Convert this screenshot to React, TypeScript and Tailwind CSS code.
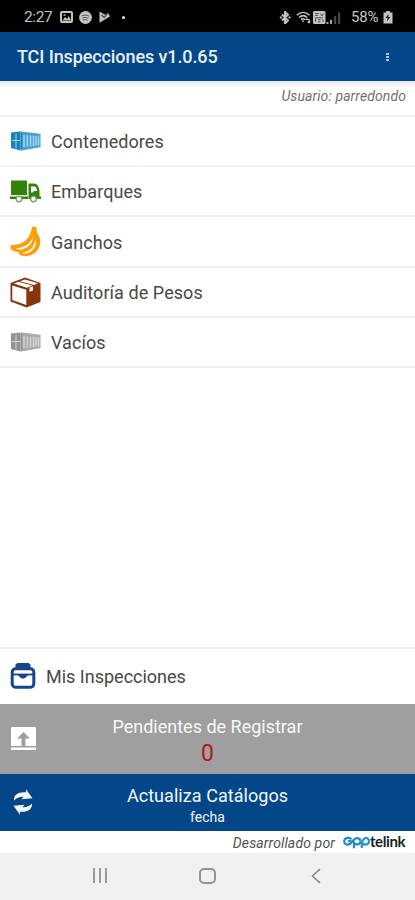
import React from "react";

function StatusBar() {
  return (
    <div className="flex h-8 shrink-0 items-center bg-black pl-6 pr-[22px] pt-[2px] text-[#c4c4c4]">
      <span className="w-[29px] pt-px text-[15.5px] leading-none tracking-[-0.4px]">2:27</span>
      <svg className="ml-[7px]" width="13" height="12" viewBox="0 0 13 12">
        <rect x="1" y="1" width="11" height="10" rx="1" fill="none" stroke="currentColor" strokeWidth="2" />
        <path d="M2.5 9.5 5 6l2 2 1.800-3 2.200 4.500zM3.500 3.200h2v1.600h-2z" fill="currentColor" />
      </svg>
      <svg className="ml-[6px]" width="13" height="13" viewBox="0 0 13 13">
        <circle cx="6.5" cy="6.5" r="6.4" fill="currentColor" />
        <path d="M3 4.600c2.500-.8 5-.6 7.200.6M3.400 6.800c2.200-.6 4.200-.4 6 .6M3.800 8.800c1.800-.4 3.400-.2 4.800.6" fill="none" stroke="#555" strokeWidth="1" />
      </svg>
      <svg className="ml-[7px]" width="12" height="12" viewBox="0 0 12 12">
        <path d="M.5.5 6 3.700 9 2l2 3.500L.5 11.700z" fill="currentColor" />
        <path d="m2.500 4 2.700 2.500L8.500 2.500" fill="none" stroke="#333" strokeWidth="1.100" />
      </svg>
      <span className="ml-[11px] h-[3px] w-[3px] rounded-full bg-[#e4e4e4]" />
      <svg className="ml-auto" width="12" height="13" viewBox="0 0 12 13">
        <path d="m3 3.500 6 6-3 3V.8l3 3-6 5.700M.8 6.500h2M9.500 6.500h2" fill="none" stroke="currentColor" strokeWidth="1.900" />
      </svg>
      <svg className="ml-[5px]" width="16" height="13" viewBox="0 0 16 13">
        <path d="M.8 4.200c4-3.600 9-3.600 12.700 0M3 6.500c2.600-2.300 5.800-2.300 8.200 0M5 8.700c1.300-1.200 2.800-1.200 4.200 0" fill="none" stroke="currentColor" strokeWidth="1.500" />
        <path d="m7 11.500-1.500-2h3zM9 9l2-2 1.800 2zM11 10.500h4l-2 2.300zM12.500 8h1.300v3h-1.300z" fill="currentColor" />
      </svg>
      <svg className="ml-[1px]" width="13" height="13" viewBox="0 0 13 13">
        <rect width="12.500" height="13" rx="1.500" fill="currentColor" />
        <path d="M2 2.500h4M2 4.500h3M7.500 2.500 9 5l1.500-2.500M2.500 6.800h7.500M2.500 6.800v4M5 8.800h2.500M5 10.800h2.500M10 8v3" fill="none" stroke="#555" strokeWidth="1" />
      </svg>
      <svg width="15" height="13" viewBox="0 0 15 13">
        <path d="M.5 11h2v2h-2zM4 9h2v4H4z" fill="#aaa" />
        <path d="M8 5h2.200v8H8zM12 1.500h2.200V13H12z" fill="#484848" />
      </svg>
      <span className="ml-[10px] w-[28px] whitespace-nowrap pt-px text-[15px] leading-none tracking-[-0.2px]">58%</span>
      <svg className="ml-[4px]" width="10" height="13" viewBox="0 0 10 13">
        <path d="M3.200 0h3.600v1.500H9.500V12.500H.5v-11h2.700z" fill="currentColor" />
        <path d="M5.500 3 2.500 7h2L4 10.200 7.500 6h-2z" fill="#222" />
      </svg>
    </div>
  );
}

function ContainerIcon({ front, side, light }: { front: string; side: string; light: string }) {
  return (
    <svg width="31" height="20" viewBox="0 0 31 20">
      <path d="M1 1.500 10.500.5v19L1 17z" fill={front} />
      <path d="M10.500.5 30.500 3v13L10.500 19.500z" fill={side} />
      <path d="M2 9.500h8M6 2.500v15" stroke={light} strokeWidth="1" />
      <path d="M14 4v12M17.300 4.200v11.500M20.500 4.500v11M23.500 4.800v10.200M26 5v9.500M28.500 5.200v9" stroke={light} strokeWidth="1.500" />
      <path d="M11.500 1.500v17" stroke={front} strokeWidth="1.500" />
      <path d="m10.500 1 20 2.500M10.500 19l20-3.500" stroke={side} strokeWidth="1" />
    </svg>
  );
}

function TruckIcon() {
  return (
    <svg width="31" height="23" viewBox="0 0 31 23">
      <path d="M1 .5h16v14.500H1zM0 16.500h18v2.500H0zM18.500 3.500H24c3 0 5.500 3.500 5.500 8v5H31V19H18.500z" fill="#33830b" />
      <path d="M21 6.500h3c1.700 0 2.900 2 3.200 4.500H24l-1 1.500h-2z" fill="#fff" />
      <g fill="#fff" stroke="#6ca35b" strokeWidth="1.300">
        <circle cx="9" cy="19" r="2.800" />
        <circle cx="23.500" cy="19" r="2.800" />
      </g>
    </svg>
  );
}

function BananaIcon() {
  return (
    <svg width="31" height="31" viewBox="0 0 31 31">
      <path d="M22 .8h4.500l.2 5.200c3 4.200 4.600 9 2.800 14.500C27 27.500 20 31 12.800 30c-2.400-.3-4-1.600-4.500-3.800C5 25.800 1.500 24.500.7 22.800c-.7-1.600-.5-3.500.8-3.800C10 19.500 18 14.500 20 8c.8-2.600 2-4.200 2-7.200Z" fill="#faa00e" />
      <path d="M6 22.600c7.500-.2 14.300-4.800 16.800-11 .2 6.200-6.300 11.700-12.800 12.200-1.800 0-3.400-.4-4-1.200Z" fill="#fff" />
      <path d="M12 27c7-1 12.500-5.500 13.500-13.500 2.300 6.500-3.700 13.700-11.800 14.200-.9 0-1.500-.2-1.700-.7Z" fill="#fff" />
    </svg>
  );
}

function BoxIcon() {
  return (
    <svg width="31" height="31" viewBox="0 0 31 31">
      <path d="M15 .5 30.500 6v19L16.500 30.500.5 24.500V6z" fill="#87350d" />
      <path d="m2.300 8.500 14 4.300v15.300l-14-5zM3.800 6.500l4.600-1.700 14 3.700-5.600 2.200zM10 4.200l5-1.800L28 6.200l-4 1.700z" fill="#fff" />
      <path d="m19.500 10.500 3.500-1.200v4.200l-3.500 1.200z" fill="#fff" />
    </svg>
  );
}

function CaseIcon() {
  return (
    <svg className="-mt-px" width="26" height="26" viewBox="0 0 26 26" fill="none" stroke="#194489">
      <path d="M5.500 1.500 7.500 0h11l2 1.500V6h-15z" fill="#194489" stroke="none" />
      <rect x="2.200" y="5.800" width="21.600" height="18.400" rx="3.200" strokeWidth="3" />
      <path d="M2 11.500h22" strokeWidth="1.800" />
      <path d="M7.500 11h11c-1.500 2-2.500 4.500-5.500 4.500S9 13 7.500 11z" fill="#194489" stroke="none" />
    </svg>
  );
}

function MenuRow({ icon, label, height }: { icon: React.ReactNode; label: string; height: string }) {
  return (
    <div className={`flex items-center border-b-2 border-[#f0f0f0] pl-[10px] ${height}`}>
      <span className="flex w-[41px] shrink-0 items-center">{icon}</span>
      <span className="pt-[2px] text-[18px] leading-6 tracking-[0.06px] text-[#484848]">{label}</span>
    </div>
  );
}

export default function App() {
  return (
    <div className="flex h-[900px] w-full flex-col overflow-hidden bg-white font-['Roboto',sans-serif]">
      <StatusBar />
      <header className="flex h-[49px] shrink-0 items-center bg-[#034789] pl-[17px] pr-[26px] text-white">
        <h1 className="pt-px text-[18px] font-medium leading-6 tracking-[-0.1px] text-[#e9f0f8]">TCI Inspecciones v1.0.65</h1>
        <span className="ml-auto flex flex-col gap-px">
          <i className="h-[2px] w-[3px] bg-[#a9c4df]" />
          <i className="h-[2px] w-[3px] bg-[#a9c4df]" />
          <i className="h-[2px] w-[3px] bg-[#a9c4df]" />
        </span>
      </header>
      <div className="flex h-9 shrink-0 items-center justify-end border-b-2 border-[#f0f0f0] bg-linear-to-b from-[#e6e6e6] to-white to-20% pr-[9px]">
        <span className="pb-[5px] text-[14px] italic leading-4 tracking-[0.1px] text-[#707070]">Usuario: parredondo</span>
      </div>
      <nav>
        <MenuRow height="h-[50px]" label="Contenedores" icon={<ContainerIcon front="#1683bd" side="#4ba3cf" light="#a5d5ed" />} />
        <MenuRow height="h-[50px]" label="Embarques" icon={<TruckIcon />} />
        <MenuRow height="h-[51px]" label="Ganchos" icon={<BananaIcon />} />
        <MenuRow height="h-[50px]" label="Auditoría de Pesos" icon={<BoxIcon />} />
        <MenuRow height="h-[50px]" label="Vacíos" icon={<ContainerIcon front="#929292" side="#ababab" light="#d4d4d4" />} />
      </nav>
      <div className="flex-1" />
      <div className="flex h-[57px] shrink-0 items-center border-t-2 border-[#f0f0f0] pl-[10px]">
        <CaseIcon />
        <span className="ml-[10px] text-[18px] leading-6 text-[#484848]">Mis Inspecciones</span>
      </div>
      <div className="flex h-[70px] shrink-0 items-center bg-[#9f9f9f] pl-[10px]">
        <svg width="27" height="24" viewBox="0 0 27 24">
          <path d="M2 0h23l1 1v18H1V1zM1 20.500h25V23H1z" fill="#fff" />
          <path d="m13.500 5 6.500 6.500h-4.500V19h-4v-7.500H7z" fill="#9f9f9f" />
        </svg>
        <div className="mr-[37px] flex flex-1 flex-col items-center pt-[6px]">
          <span className="text-[18px] leading-6 text-[#f7f7f7]">Pendientes de Registrar</span>
          <span className="text-[23px] leading-[30px] text-[#b5161c]">0</span>
        </div>
      </div>
      <div className="flex h-[57px] shrink-0 items-center bg-[#034789] pl-[13px] text-[#f3f7fc]">
        <svg className="-mt-[2px]" width="20" height="26" viewBox="0 0 20 26" fill="currentColor">
          <path d="M1 11.500C.5 5.500 6 2.500 13 3.300V.3L19.500 9.300 8.500 10.300l2-2.500C7 7.500 4 8.500 1 11.500Z" />
          <path d="M19 14.500c.5 6-5 9-12 8.200v3L.5 16.700l11-1-2 2.500c3.500.3 6.500-.7 9.500-3.700Z" />
        </svg>
        <div className="mr-[33px] flex flex-1 flex-col items-center pt-[5px]">
          <span className="text-[18px] leading-6 tracking-[0.05px]">Actualiza Catálogos</span>
          <span className="text-[14px] leading-[18px]">fecha</span>
        </div>
      </div>
      <footer className="flex h-[22px] shrink-0 items-center justify-end pr-[9px]">
        <span className="mr-[8px] pt-px text-[14px] italic leading-4 tracking-[0.13px] text-[#505050]">Desarrollado por</span>
        <span className="flex items-center">
          <svg width="27" height="13" viewBox="0 0 27 13" fill="none" strokeWidth="2.200">
            <path d="M8.500 3.200C7.500 2 6.500 1.800 5 1.800c-2.200 0-3.800 1.600-3.800 3.400S2.800 8.600 5 8.600c3 0 4-3 6-5 2.500-2.600 6.500-1.200 6.500 1.600 0 3-4.500 4.500-6.500 1.600v5.400" stroke="#2189c5" />
            <path d="M8.500 5.200H5M18.800 12V7c.5-2 1-3.800 3-4.800 2-1 4.200.6 4.200 3s-2 3.400-3.500 3.400-3-.8-3.700-2" stroke="#2493d1" />
          </svg>
          <span className="h-[18px] w-[36px] whitespace-nowrap font-['Lato','Roboto',sans-serif] text-[15px] font-bold leading-4 tracking-[-0.4px] text-[#171e25]">telink</span>
        </span>
      </footer>
      <div className="grid h-[47px] shrink-0 grid-cols-[100px_108px_108px_99px] items-center bg-[#f1f1f1] pb-[2px]">
        <span className="-mr-[7px] flex justify-end gap-1">
          <i className="h-[15px] w-[2px] bg-[#999]" />
          <i className="h-[15px] w-[2px] bg-[#999]" />
          <i className="h-[15px] w-[2px] bg-[#999]" />
        </span>
        <span className="-mr-2 flex justify-end"><i className="h-4 w-[17px] rounded-[5px] border-2 border-[#939393]" /></span>
        <svg className="-mr-[5px] justify-self-end" width="10" height="16" viewBox="0 0 10 16">
          <path d="M9 1 1.500 8 9 15" fill="none" stroke="#888" strokeWidth="1.700" />
        </svg>
      </div>
    </div>
  );
}
